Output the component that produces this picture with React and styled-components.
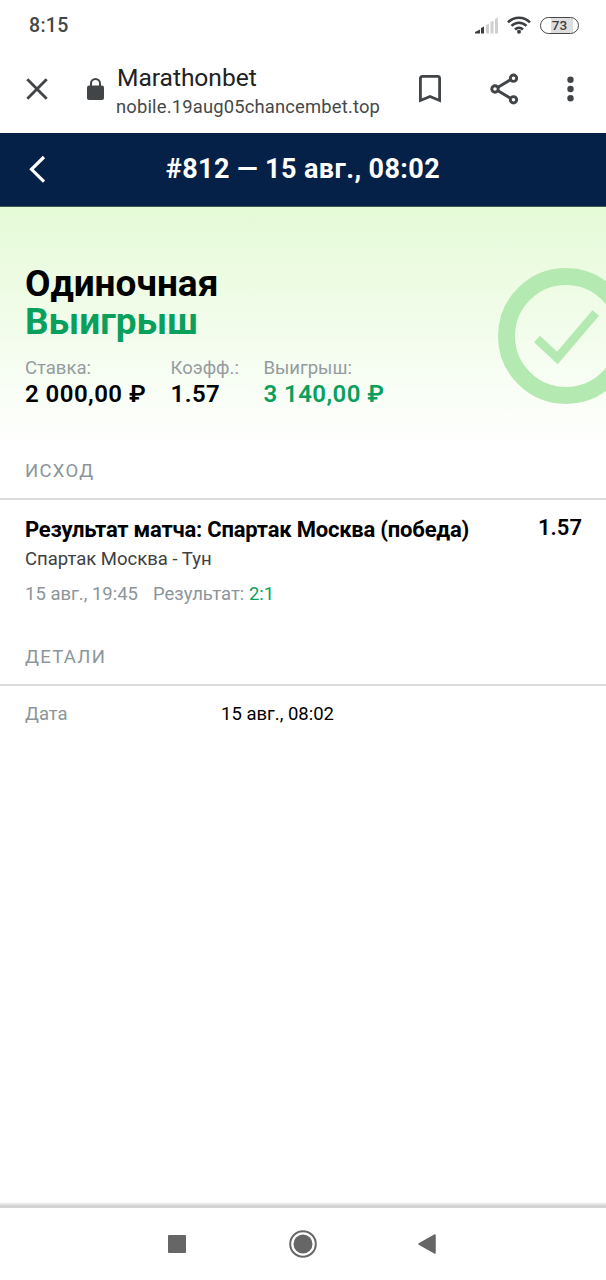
import styled, { createGlobalStyle } from 'styled-components';

const GlobalStyle = createGlobalStyle`
  *, *::before, *::after {
    box-sizing: border-box;
  }
  body {
    margin: 0;
    background-color: #fff;
    font-family: Roboto, "Noto Sans", sans-serif;
    color: #000;
  }
  svg {
    display: block;
    flex-shrink: 0;
  }
`;

const Screen = styled.div`
  display: flex;
  flex-direction: column;
  width: 606px;
  height: 1280px;
  overflow: hidden;
  background-color: #fff;
`;

const StatusBar = styled.div`
  display: flex;
  align-items: center;
  justify-content: space-between;
  height: 50px;
  padding: 0 27px 0 29px;
`;

const Clock = styled.span`
  font-size: 19.5px;
  font-weight: 500;
  line-height: 22px;
  letter-spacing: 0.3px;
  color: #444749;
  padding-top: 1px;
`;

const StatusIcons = styled.div`
  display: flex;
  align-items: center;
  gap: 9px;
`;

const Battery = styled.div`
  display: flex;
  align-items: center;
  justify-content: center;
  width: 39px;
  height: 17px;
  border: 1.8px solid #444749;
  border-radius: 9px;
  background: linear-gradient(to right, #fff 28%, #dedede 28%, #dedede 86%, #fff 86%);
  font-size: 13.5px;
  font-weight: 500;
  line-height: 15px;
  color: #3c3f41;
`;

const BrowserBar = styled.div`
  display: flex;
  align-items: center;
  height: 83px;
  padding: 0 32px 5px 25px;
`;

const LockWrapper = styled.div`
  margin: 0 12px 0 38px;
`;

const PageInfo = styled.div`
  flex: 1;
  min-width: 0;
  padding-top: 6px;
`;

const PageTitle = styled.div`
  padding-left: 1px;
  font-size: 24.6px;
  line-height: 28px;
  letter-spacing: -0.05px;
  color: #202224;
`;

const PageUrl = styled.div`
  font-size: 18.4px;
  line-height: 29px;
  letter-spacing: 0.17px;
  color: #45484a;
  white-space: nowrap;
`;

const BrowserActions = styled.div`
  display: flex;
  align-items: center;
`;

const Action = styled.div`
  margin-left: ${({ $gap }) => $gap}px;
`;

const Header = styled.header`
  display: grid;
  grid-template-columns: 60px 1fr 60px;
  align-items: center;
  height: 74px;
  padding-bottom: 1px;
  background-color: #062147;
  border-bottom: 1px solid #3d5a55;
`;

const HeaderTitle = styled.h1`
  margin: 0;
  font-size: 27px;
  font-weight: 700;
  line-height: 32px;
  letter-spacing: 0.4px;
  text-align: center;
  color: #fff;
`;

const Hero = styled.section`
  position: relative;
  height: 243px;
  padding: 58px 25px 0;
  overflow: hidden;
  background: linear-gradient(to bottom, #e5fad7 0%, #f0fce8 42%, #ffffff 100%);
`;

const HeroTitle = styled.h2`
  margin: 0;
  font-size: 37px;
  font-weight: 700;
  line-height: 38px;
  color: ${({ $won }) => ($won ? '#08a05c' : '#000')};
`;

const WinMark = styled.svg`
  position: absolute;
  top: 61px;
  right: -28px;
`;

const Stats = styled.dl`
  display: flex;
  gap: 24.5px;
  margin: 15.5px 0 0;
`;

const StatLabel = styled.dt`
  font-size: 18.5px;
  line-height: 23px;
  color: #949c9f;
`;

const StatValue = styled.dd`
  margin: 0;
  font-size: 24px;
  font-weight: 600;
  line-height: 28px;
  letter-spacing: 0.45px;
  white-space: nowrap;
  color: ${({ $won }) => ($won ? '#08a05c' : '#000')};
`;

const SectionTitle = styled.h3`
  height: 50px;
  margin: 0;
  padding: 9.5px 25px 0;
  border-bottom: 2px solid #dadbdd;
  font-size: 18.5px;
  font-weight: 400;
  line-height: 22px;
  letter-spacing: 1.3px;
  color: #8c959b;
`;

const Outcome = styled.div`
  display: flex;
  justify-content: space-between;
  height: 136px;
  padding: 17px 24px 0 25px;
`;

const OutcomeName = styled.div`
  font-size: 22px;
  font-weight: 700;
  line-height: 26px;
  letter-spacing: -0.21px;
`;

const OutcomeOdds = styled.div`
  font-size: 22px;
  font-weight: 600;
  line-height: 21px;
`;

const Match = styled.div`
  margin-top: 4px;
  font-size: 18.5px;
  line-height: 24px;
  color: #3e4042;
`;

const Meta = styled.div`
  display: flex;
  gap: 15px;
  margin-top: 11px;
  font-size: 18.5px;
  line-height: 24px;
  color: #8c959b;
`;

const Score = styled.span`
  color: #08a05c;
`;

const DetailRow = styled.div`
  display: grid;
  grid-template-columns: 196px 1fr;
  padding: 16px 25px;
  font-size: 18.5px;
  line-height: 24px;
`;

const DetailLabel = styled.span`
  color: #8c959b;
`;

const NavBar = styled.nav`
  display: flex;
  align-items: center;
  justify-content: space-between;
  height: 78px;
  margin-top: auto;
  padding: 5px 170px 0 168px;
  background: linear-gradient(to bottom, #fff 0, #d0d0d0 4px, #d4d4d4 5.5px, #fff 6px);
`;

const stats = [
  { label: 'Ставка:', value: '2 000,00 ₽' },
  { label: 'Коэфф.:', value: '1.57' },
  { label: 'Выигрыш:', value: '3 140,00 ₽', won: true },
];

const SignalIcon = () => (
  <svg width="23" height="17" viewBox="0 0 23 17">
    <path d="M0 16.500v-1.500l5-2.500v4z M6 11l3-1.500v7h-3z" fill="#3c3f41" />
    <path d="M11 8l3-1.500v10h-3z M15.500 5l3-1.500v13h-3z M20 2l3-1.500v16h-3z" fill="#cfcfcf" />
  </svg>
);

const WifiIcon = () => (
  <svg width="24" height="18" viewBox="0 0 24 18" fill="none" stroke="#3c3f41" strokeWidth="2.500">
    <path d="M1 6.300C7.300 .1 16.700 .1 23 6.300" />
    <path d="M4.500 9.900c4.300-4.200 10.700-4.200 15 0" />
    <path d="M8 13.500c2.300-2.200 5.700-2.200 8 0" />
    <circle cx="12" cy="15.800" r="2" fill="#3c3f41" stroke="none" />
  </svg>
);

const App = () => {
  return (
    <>
      <GlobalStyle />
      <Screen>
        <StatusBar>
          <Clock>8:15</Clock>
          <StatusIcons>
            <SignalIcon />
            <WifiIcon />
            <Battery>73</Battery>
          </StatusIcons>
        </StatusBar>

        {/* Browser toolbar */}
        <BrowserBar>
          <svg width="24" height="24" viewBox="0 0 24 24" stroke="#414548" strokeWidth="2.800">
            <path d="M2.300 2.300L21.700 21.700M21.700 2.300L2.300 21.700" />
          </svg>
          <LockWrapper>
            <svg width="17" height="22" viewBox="0 0 17 22">
              <path d="M4 9V5.500a4.500 4.500 0 0 1 9 0V9" fill="none" stroke="#414548" strokeWidth="2" />
              <rect y="7.500" width="17" height="14.500" rx="2" fill="#414548" />
            </svg>
          </LockWrapper>
          <PageInfo>
            <PageTitle>Marathonbet</PageTitle>
            <PageUrl>nobile.19aug05chancembet.top</PageUrl>
          </PageInfo>
          <BrowserActions>
            <Action $gap={0}>
              <svg width="22" height="28" viewBox="0 0 22 28" fill="none" stroke="#414548" strokeWidth="2.800">
                <path d="M1.400 25.500V3.400q0-2 2-2h15.200q2 0 2 2v22.100L11 21.400z" />
              </svg>
            </Action>
            <Action $gap={49}>
              <svg width="29" height="32" viewBox="0 0 29 32" fill="none" stroke="#414548" strokeWidth="2.900">
                <path d="M8 14.200L20 7M8 17.800L20 25" />
                <circle cx="5" cy="16" r="3.200" />
                <circle cx="23.500" cy="5.200" r="3.200" />
                <circle cx="23.500" cy="26.800" r="3.200" />
              </svg>
            </Action>
            <Action $gap={48}>
              <svg width="7" height="26" viewBox="0 0 7 26" fill="#414548">
                <circle cx="3.500" cy="3.700" r="3.200" />
                <circle cx="3.500" cy="13" r="3.200" />
                <circle cx="3.500" cy="22.300" r="3.200" />
              </svg>
            </Action>
          </BrowserActions>
        </BrowserBar>

        <Header>
          <svg width="60" height="30" viewBox="0 0 60 30" fill="none" stroke="#fff" strokeWidth="3.200">
            <path d="M44 3L31.500 15.300L44 27.600" />
          </svg>
          <HeaderTitle>#812 — 15 авг., 08:02</HeaderTitle>
        </Header>

        {/* Bet summary */}
        <Hero>
          <HeroTitle>Одиночная</HeroTitle>
          <HeroTitle $won>Выигрыш</HeroTitle>
          <Stats>
            {stats.map(({ label, value, won }) => (
              <div key={label}>
                <StatLabel>{label}</StatLabel>
                <StatValue $won={won}>{value}</StatValue>
              </div>
            ))}
          </Stats>
          <WinMark width="136" height="136" viewBox="0 0 136 136" fill="none" stroke="#b4eab2">
            <circle cx="68" cy="68" r="59.500" strokeWidth="17" />
            <path d="M39 71L59.300 90L97.700 45" strokeWidth="8.700" />
          </WinMark>
        </Hero>

        {/* Outcome */}
        <SectionTitle>ИСХОД</SectionTitle>
        <Outcome>
          <div>
            <OutcomeName>Результат матча: Спартак Москва (победа)</OutcomeName>
            <Match>Спартак Москва - Тун</Match>
            <Meta>
              <span>15 авг., 19:45</span>
              <span>
                Результат: <Score>2:1</Score>
              </span>
            </Meta>
          </div>
          <OutcomeOdds>1.57</OutcomeOdds>
        </Outcome>

        {/* Details */}
        <SectionTitle>ДЕТАЛИ</SectionTitle>
        <DetailRow>
          <DetailLabel>Дата</DetailLabel>
          <span>15 авг., 08:02</span>
        </DetailRow>

        <NavBar>
          <svg width="18" height="18" viewBox="0 0 18 18">
            <rect width="18" height="18" rx="1" fill="#666" />
          </svg>
          <svg width="30" height="28" viewBox="0 0 30 28">
            <circle cx="16" cy="14" r="12.800" fill="none" stroke="#666" strokeWidth="2" />
            <circle cx="16" cy="14" r="9.500" fill="#666" />
          </svg>
          <svg width="18" height="20" viewBox="0 0 18 20">
            <path d="M17 1v18L1 10z" fill="#666" stroke="#666" strokeWidth="1.500" strokeLinejoin="round" />
          </svg>
        </NavBar>
      </Screen>
    </>
  );
};

export default App;
